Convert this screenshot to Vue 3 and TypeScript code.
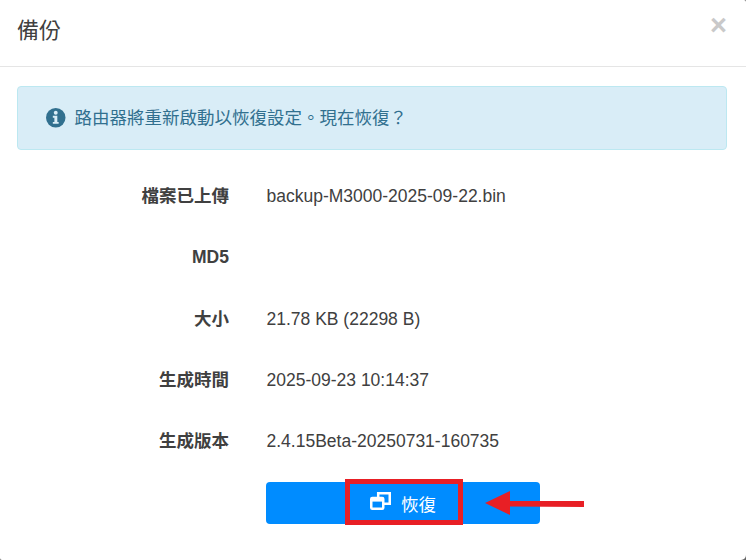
<script setup lang="ts">
const rows = [
  { label: '檔案已上傳', value: 'backup-M3000-2025-09-22.bin' },
  { label: 'MD5', value: '', latin: true },
  { label: '大小', value: '21.78 KB (22298 B)' },
  { label: '生成時間', value: '2025-09-23 10:14:37' },
  { label: '生成版本', value: '2.4.15Beta-20250731-160735' },
]
</script>

<template>
  <div class="modal">
    <header class="modal-header">
      <h4>備份</h4>
      <span class="close">×</span>
    </header>
    <div class="modal-body">
      <div class="alert">
        <svg class="info" viewBox="0 0 20 20" width="19.5" height="19.5">
          <circle cx="10" cy="10" r="10" fill="#31708f" />
          <circle cx="10" cy="4.8" r="2" fill="#d9edf7" />
          <path d="M7 8h4.6v6.3H13V16.2H7v-1.9h1.6V9.9H7z" fill="#d9edf7" />
        </svg>
        <span>路由器將重新啟動以恢復設定。現在恢復？</span>
      </div>
      <div class="rows">
        <div v-for="row in rows" :key="row.label" class="row">
          <label :class="{ latin: row.latin }">{{ row.label }}</label>
          <span>{{ row.value }}</span>
        </div>
      </div>
      <div class="actions">
        <button class="restore" type="button">
          <svg class="copy" viewBox="0 0 21 18" width="21" height="18" fill="none" stroke="#fff" stroke-width="2.5">
            <path d="M8.2 5.5V1.25H19.75V11.8H14" />
            <rect x="1.25" y="5.9" width="12" height="10.85" rx="1" />
            <path d="M1 7.8h12.4" stroke-width="3.6" />
          </svg>
          <span>恢復</span>
          <i class="mark"></i>
        </button>
        <svg class="arrow" viewBox="0 0 100 24" width="100" height="24">
          <path d="M0 12 25 0 25 10 99 10 99 16 25 15.5 25 24Z" fill="#e81f25" />
        </svg>
      </div>
    </div>
  </div>
</template>

<style>
html,
body {
  margin: 0;
  background: #666;
}
</style>

<style scoped>
.modal {
  width: 746px;
  height: 560px;
  box-sizing: border-box;
  overflow: hidden;
  background: #fff;
  border-radius: 0 2px 5px 2px;
  color: #404040;
  font-family: 'Liberation Sans', 'Noto Sans CJK TC', sans-serif;
  font-size: 17.5px;
}

.modal-header {
  height: 67px;
  box-sizing: border-box;
  border-bottom: 1px solid #e5e5e5;
  display: flex;
  align-items: center;
  justify-content: space-between;
  padding: 0 19px 11px 17px;
}

.modal-header h4 {
  margin: 0;
  font-size: 22px;
  font-weight: 400;
}

.close {
  font-size: 29px;
  font-weight: 700;
  line-height: 1;
  color: #c9c9c9;
  margin-top: -5px;
}

.modal-body {
  padding: 19px 19px 0 17px;
}

.alert {
  height: 64px;
  box-sizing: border-box;
  display: flex;
  align-items: center;
  gap: 9px;
  padding-left: 28px;
  background: #d9edf7;
  border: 1px solid #bce8f1;
  border-radius: 4px;
  color: #31708f;
  font-size: 17.5px;
}

.alert span {
  margin-top: -4px;
}

.rows {
  margin-top: 16px;
}

.row {
  height: 61.25px;
  display: flex;
  align-items: center;
  gap: 37.5px;
}

.row label {
  width: 212px;
  padding-bottom: 4px;
  text-align: right;
  font-weight: 700;
}

.row label.latin {
  padding-bottom: 0;
}

.actions {
  position: relative;
  margin: 10px 0 0 249px;
  width: 274px;
  height: 42px;
}

.restore {
  position: relative;
  width: 100%;
  height: 42px;
  padding: 0;
  border: 0;
  border-radius: 4px;
  background: #008cff;
  color: #fff;
  font: inherit;
  font-size: 17.5px;
  display: flex;
  align-items: center;
  justify-content: center;
  gap: 10px;
}

.copy {
  margin-top: -5px;
}

.mark {
  position: absolute;
  left: 79px;
  top: -3px;
  width: 118px;
  height: 46px;
  box-sizing: border-box;
  border: 5px solid #e81f25;
}

.arrow {
  position: absolute;
  left: 219px;
  top: 9px;
}
</style>
